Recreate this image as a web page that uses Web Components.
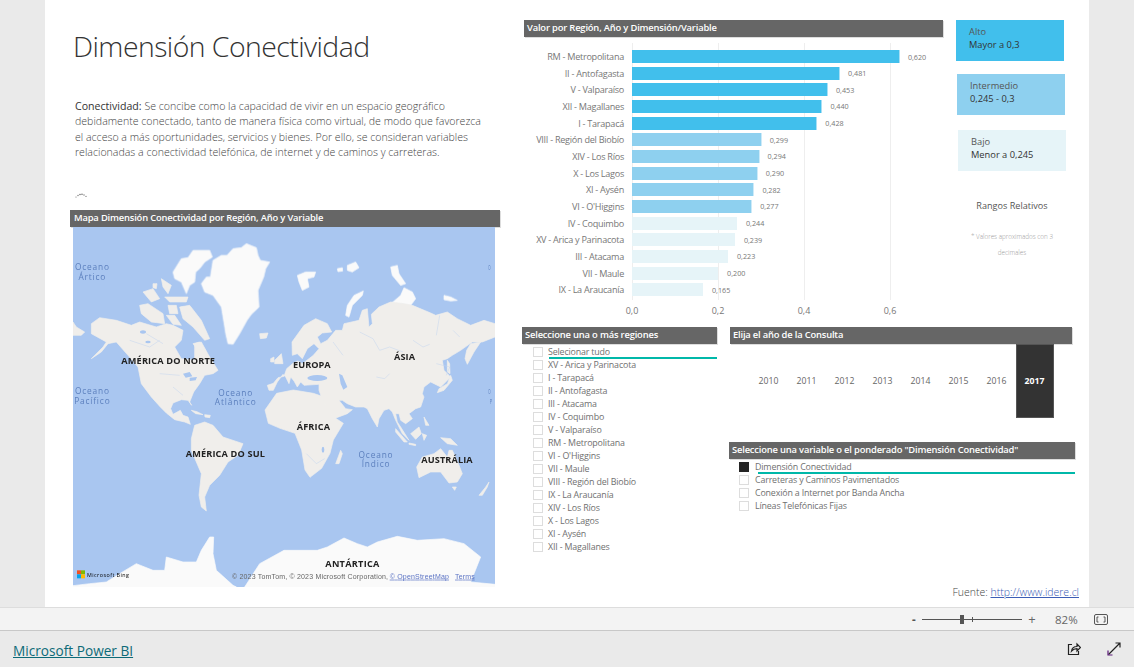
<!DOCTYPE html>
<html lang="es"><head><meta charset="utf-8"><title>Dimensión Conectividad</title>
<style>
html,body{margin:0;padding:0;background:#eaeaea;font-family:"Open Sans","Noto Sans",sans-serif}
</style></head><body>
<x-app></x-app>
<script>
const FONT='"Open Sans","Noto Sans",sans-serif';
function def(name,html,init){
  customElements.define(name,class extends HTMLElement{
    constructor(){super();const r=this.attachShadow({mode:'open'});r.innerHTML=html;}
    connectedCallback(){if(init&&!this._i){this._i=1;init(this.shadowRoot,this);}}
  });
}
def('x-head',`<style>:host{display:block;height:17px;background:#666;color:#fff;font:600 var(--hs,9.4px)/16px ${FONT};letter-spacing:-.18px;padding-left:var(--hp,4px);box-sizing:border-box;white-space:nowrap;overflow:hidden;box-shadow:1px 1px 0 #ddd}</style><slot></slot>`);

def('x-world-map',`<style>:host{display:block;width:422px;height:360px;overflow:hidden;margin-left:3px}svg{display:block;width:422px;height:360px}
.l{fill:#f0eeeb;stroke:#f0eeeb;stroke-width:2;stroke-linejoin:round;filter:url(#soft)}.w{fill:#fafafa;stroke:#fafafa;stroke-width:2;stroke-linejoin:round;filter:url(#soft)}.b{fill:#a9c6f0;filter:url(#soft)}.r{fill:none;stroke:#c3d4ee;stroke-width:1.5}
.c{font:700 27.5px ${FONT};fill:#222}.o{font:400 25px ${FONT};fill:#5b7fbd;letter-spacing:2.500px;text-anchor:middle}.e{font:400 24px ${FONT};fill:#5b7fbd}
.a{font:21px "Liberation Sans",sans-serif;fill:#666}.lk{fill:#5b73c4;text-decoration:underline}</style>
<svg viewBox="0 0 1266 1080" role="img" aria-label="Mapa">
<defs><filter id="soft" x="-5%" y="-5%" width="110%" height="110%"><feGaussianBlur stdDeviation="1.2"/></filter></defs>
<rect width="1266" height="1080" fill="#a9c6f0"/>
<g class="w">
<polygon points="385,170 400,150 412,150 420,100 445,85 462,85 480,65 505,62 520,50 550,62 555,85 562,100 590,105 578,125 572,150 555,190 558,240 535,262 522,280 500,320 480,352 465,350 458,320 455,300 445,240 420,205 395,195"/>
<polygon points="300,135 325,95 345,92 360,70 410,70 418,90 395,105 380,125 368,135 365,165 350,175 340,200 325,165 305,155"/>
<g transform="translate(633,0)">
<polygon points="40,145 65,135 95,135 90,150 70,155 75,180 55,190 45,165"/>
<polygon points="185,265 190,235 210,205 238,192 235,205 205,235 195,270"/>
<polygon points="320,120 340,115 345,140 365,170 350,175 325,145"/>
<polygon points="480,205 500,210 520,220 500,222 480,218"/>
<polygon points="190,115 215,105 225,122 205,135 190,130"/><polygon points="160,125 175,122 176,132 162,134"/>
<polygon points="315,235 350,205 360,182 385,195 395,215 380,235 350,230 325,240"/>
</g>
</g>
<g class="l">
<polygon points="0,285 10,300 35,315 25,325 0,325"/>
<polygon points="55,290 80,272 130,280 175,295 200,285 250,300 280,290 300,295 330,310 325,340 305,360 325,395 365,400 365,350 385,345 410,390 435,430 420,440 395,445 380,470 362,495 350,525 356,535 345,520 325,518 300,528 293,545 300,562 322,550 330,565 345,570 352,592 335,585 305,578 280,558 262,540 235,510 205,470 195,420 165,385 130,345 105,350 85,375 55,395 90,360 100,345 55,320"/>
<polygon points="320,240 350,235 385,280 410,335 395,340 360,300 330,275"/>
<polygon points="360,350 380,345 395,370 375,370"/>
<polygon points="200,235 225,230 270,260 275,290 235,285 205,260"/>
<polygon points="280,265 305,265 325,295 300,292"/>
<polygon points="210,195 240,185 260,215 235,225"/><polygon points="265,155 295,175 285,200 270,180"/>
<polygon points="275,210 345,210 340,225 290,225"/><polygon points="285,235 310,235 315,260 290,260"/>
<polygon points="325,240 345,240 360,265 335,270"/><polygon points="240,170 252,170 250,185 240,182"/>
<polygon points="560,320 585,318 580,333 562,335"/>
<polygon points="355,550 372,554 390,563 368,560"/><polygon points="395,563 412,565 410,572 396,570"/>
<polygon points="355,635 365,595 395,585 420,595 450,630 510,650 495,685 465,705 440,745 410,775 395,810 400,852 385,840 378,805 385,740 355,670"/>
<polygon points="576,549 611,499 661,489 721,499 751,509 781,569 811,589 781,639 771,679 746,724 711,751 696,729 686,669 666,619 621,604 586,589"/>
<g transform="translate(633,0)">
<polygon points="-32,469 -18,452 0,448 8,425 28,408 42,402 55,410 75,395 88,385 105,365 90,350 70,365 55,395 40,380 25,385 24,345 60,295 95,275 130,290 143,315 115,318 100,330 110,350 130,340 155,310 175,310 180,290 225,280 235,250 250,245 255,300 265,290 262,262 285,240 320,225 360,230 385,235 440,258 455,265 490,255 520,275 560,295 600,280 633,290 633,330 595,345 565,345 530,370 505,385 490,395 475,400 480,430 500,450 470,480 440,465 420,480 415,500 420,510 410,540 395,545 375,560 385,575 365,590 350,580 345,560 335,560 340,585 350,600 375,640 355,620 335,580 325,555 315,545 300,550 285,575 280,600 265,575 250,545 240,540 215,540 190,530 175,520 165,520 185,545 205,548 190,560 150,575 130,545 112,510 105,490 105,472 60,475 50,465 40,480 30,462 20,450 15,470 5,450 -3,442 -20,465 -32,490 -45,490 -50,475"/>
<polygon points="560,350 590,345 570,375 550,412 543,395 548,370"/>
<polygon points="490,400 497,410 498,440 490,435"/>
<polygon points="500,445 505,460 480,490 460,497 465,485 490,470"/>
<polygon points="-28,400 -8,380 -3,410 -28,410"/><polygon points="-40,395 -30,390 -30,405 -40,405"/>
<polygon points="335,605 370,645 360,645 335,615"/><polygon points="375,648 395,652 395,656 375,652"/>
<polygon points="380,620 405,600 412,620 395,637"/><polygon points="420,570 435,595 425,595"/>
<polygon points="470,632 500,635 520,655 490,650"/><polygon points="415,620 428,625 420,640"/>
<polygon points="398,720 415,690 450,680 470,665 490,690 495,670 505,670 525,715 535,740 520,765 495,768 470,735 440,735 405,752"/>
<polygon points="505,780 517,780 512,790"/><polygon points="585,805 605,780 615,765 610,780 595,805"/>
<polygon points="155,710 170,670 175,680 165,710"/>
</g>
</g>
<g class="w">
<polygon points="0,1080 0,1076 50,1070 100,1065 140,1040 190,1010 240,1030 275,1030 280,990 330,1005 370,1005 385,970 410,930 422,930 420,980 430,1030 480,1075 490,1080"/>
<polygon points="515,1080 560,1010 633,970 733,970 763,960 813,933 853,950 883,960 913,945 973,928 1033,940 1113,935 1173,950 1223,990 1203,1040 1193,1065 1266,1072 1266,1080"/>
</g>
<g class="b">
<ellipse cx="733" cy="453" rx="30" ry="9"/>
<polygon points="798,440 808,445 823,480 811,488 803,470"/>
<polygon points="330,440 350,435 358,448 338,452"/><polygon points="350,452 372,450 368,460 350,462"/>
<ellipse cx="210" cy="315" rx="9" ry="5"/><ellipse cx="225" cy="345" rx="8" ry="4"/>
<ellipse cx="750" cy="668" rx="4" ry="9"/>
</g>
<g class="r">
<path d="M860 315l40 20 20 35 30-10 40 15M1020 340l30 20 20-8M1100 265l-10 60M1140 310l20 20M780 345l30 40M910 450l25 5 15-15M1090 410l40 10-10 25M700 680l30 30 25-15M300 480l30 25M260 440l60 5M170 340l60 20 30-20M220 320l50 30"/>
</g>
<text class="o" x="58" y="130">Oceano</text><text class="o" x="58" y="159">Ártico</text>
<text class="o" x="58" y="501">Oceano</text><text class="o" x="58" y="530">Pacífico</text>
<text class="o" x="488" y="506">Oceano</text><text class="o" x="488" y="535">Atlântico</text>
<text class="o" x="909" y="692">Oceano</text><text class="o" x="909" y="721">Índico</text>
<text class="e" x="1246" y="130" textLength="7" lengthAdjust="spacingAndGlyphs">O</text>
<text class="e" x="1246" y="501" textLength="7" lengthAdjust="spacingAndGlyphs">O</text>
<text class="e" x="1250" y="530" textLength="7" lengthAdjust="spacingAndGlyphs">P</text>
<text class="c" x="145" y="410" textLength="281">AMÉRICA DO NORTE</text>
<text class="c" x="660" y="424" textLength="113">EUROPA</text>
<text class="c" x="963" y="400" textLength="63">ÁSIA</text>
<text class="c" x="671" y="610" textLength="100">ÁFRICA</text>
<text class="c" x="338" y="689" textLength="238">AMÉRICA DO SUL</text>
<text class="c" x="1045" y="708" textLength="154">AUSTRÁLIA</text>
<text class="c" x="757" y="1021" textLength="162">ANTÁRTICA</text>
<rect x="12" y="1030" width="12" height="12" fill="#f25022"/><rect x="24" y="1030" width="12" height="12" fill="#7fba00"/>
<rect x="12" y="1042" width="12" height="12" fill="#00a4ef"/><rect x="24" y="1042" width="12" height="12" fill="#ffb900"/>
<text x="42" y="1050" style="font:400 20px ${FONT};fill:#777" textLength="126">Microsoft Bing</text>
<text class="a" x="477" y="1055" textLength="468">© 2023 TomTom, © 2023 Microsoft Corporation,</text>
<text class="a lk" x="950" y="1055" textLength="178">© OpenStreetMap</text>
<text class="a lk" x="1146" y="1055" textLength="59">Terms</text>
</svg>`);

const DATA=[["RM - Metropolitana",.62,"620",0,1],["II - Antofagasta",.481,"481",0],["V - Valparaíso",.453,"453",0],["XII - Magallanes",.44,"440",0],["I - Tarapacá",.428,"428",0],["VIII - Región del Biobío",.299,"299",1],["XIV - Los Ríos",.294,"294",1],["X - Los Lagos",.29,"290",1],["XI - Aysén",.282,"282",1],["VI - O'Higgins",.277,"277",1],["IV - Coquimbo",.244,"244",2],["XV - Arica y Parinacota",.239,"239",2],["III - Atacama",.223,"223",2],["VII - Maule",.2,"200",2],["IX - La Araucanía",.165,"165",2]];
def('x-bar-chart',`<style>:host{display:block;position:relative;height:284px;--o:108px;font-family:${FONT}}
.plot{padding-top:5.200px}
.row{display:flex;align-items:center;height:16.67px}
.lab{width:100px;flex:none;text-align:right;font-size:9.1px;letter-spacing:-.27px;color:#777;white-space:nowrap;margin-right:8px}
.bar{height:13px;flex:none;box-sizing:border-box}
.val{font-size:7.2px;color:#777;margin-left:9px;white-space:nowrap}
.c0{background:#41bfec;box-shadow:1px 0 0 #a8dff5}.c1{background:#8ed0ef;box-shadow:1px 0 0 #cdeaf8}.c2{background:#e6f4f8}
.grid{position:absolute;left:var(--o);top:0;height:257px;width:259px;display:flex}
.grid i{width:86px;flex:none;border-left:1px solid #eee;box-sizing:border-box}
.axis{display:flex;margin-left:var(--o);margin-top:6px}
.axis span{width:86px;flex:none;font-size:9px;color:#777}.axis b{font-weight:400;display:inline-block;transform:translateX(-50%)}
.plot,.axis{position:relative}</style>
<div class="grid"><i></i><i></i><i></i><i style="width:1px"></i></div><div class="plot"></div>
<div class="axis"><span><b>0,0</b></span><span><b>0,2</b></span><span><b>0,4</b></span><span><b>0,6</b></span></div>`,
(r)=>{r.querySelector('.plot').innerHTML=DATA.map(d=>`<div class="row"><span class="lab">${d[0]}</span><span class="bar c${d[3]}" style="width:${(d[1]*430.5).toFixed(1)}px"></span><span class="val">0,${d[2]}</span></div>`).join('')});

def('x-legend',`<style>:host{display:block;width:108px;height:41px;box-sizing:border-box;padding:5px 0 0 13px;font:9.3px/13.4px ${FONT};color:#555}
.b{color:#333;display:block}</style><slot></slot><span class="b"><slot name="v"></slot></span>`);

def('x-check-list',`<style>:host{display:block;font:8.9px/13px ${FONT};letter-spacing:-.17px;color:#707070}</style><slot></slot>`);
def('x-check',`<style>:host{display:flex;align-items:center;height:13px;position:relative;white-space:nowrap}
.box{width:10px;height:10px;box-sizing:border-box;border:1px solid #ddd;flex:none;margin-right:var(--gap,5px);background:#fff}
:host([on]) .box{background:#252525;border-color:#252525}
.ul{display:none;position:absolute;left:var(--ul,16px);right:0;top:12px;height:2px;background:#00b8a9}
:host([ul]) .ul{display:block}</style><span class="box"></span><slot></slot><span class="ul"></span>`);

def('x-years',`<style>:host{display:grid;grid-template-columns:repeat(8,38px);margin-left:20.500px;height:73px;font:8.7px/74px ${FONT};color:#666;text-align:center}
span{display:block}.on{background:#333;color:#fff;font-weight:700;box-shadow:inset 0 0 0 1px #555}</style>
<span>2010</span><span>2011</span><span>2012</span><span>2013</span><span>2014</span><span>2015</span><span>2016</span><span class="on">2017</span>`);

def('x-zoom-bar',`<style>:host{display:flex;align-items:center;height:24px;box-sizing:border-box;background:#f3f3f3;border-top:1px solid #ddd;border-bottom:1px solid #c8c8c8;font:11.500px ${FONT};color:#666;padding-left:912px}
.m{font-weight:700;width:10px;color:#555}.s{position:relative;width:100px;height:1px;background:#555;flex:none}
.t{position:absolute;left:38px;top:-4px;width:4px;height:9px;background:#555}.k{position:absolute;left:50px;top:-2px;width:1px;height:5px;background:#555}
.p{width:20px;text-align:center;font-size:13px;margin-left:0}.v{margin-left:13px;width:32px;color:#666}svg{margin-left:7px}</style>
<span class="m">-</span><span class="s"><i class="t"></i><i class="k"></i></span><span class="p">+</span><span class="v">82%</span>
<svg width="14" height="11" viewBox="0 0 14 11" fill="none" stroke="#555"><rect x=".5" y=".5" width="13" height="10" rx="1.500"/><path d="M4.500 3H3v5h1.500M9.500 3H11v5H9.500"/></svg>`);

def('x-foot',`<style>:host{display:flex;align-items:center;height:36px;box-sizing:border-box;padding:3px 0 0 13px;background:#eaeaea;font:13.650px ${FONT}}
a{color:#0d6a78;text-decoration:underline;flex:1}svg{display:block;margin-top:-3px}.i1{margin-right:26px}.i2{margin-right:13px}</style>
<a href="#">Microsoft Power BI</a>
<svg class="i1" width="14" height="14" viewBox="0 0 14 14" fill="none" stroke="#222" stroke-width="1.2"><path d="M5 2.500H1.500v10h10V9"/><path d="M4.500 9c.5-3 3-4.500 5.500-4.500V2l3.500 3.500L10 9V6.600C8 6.600 6 7.300 4.500 9z"/></svg>
<svg class="i2" width="14" height="14" viewBox="0 0 14 14" fill="none" stroke-width="1.2"><path d="M1.500 12.500l11-11M8.500 1h4.500v4.500" stroke="#222"/><path d="M1 8.500V13h4.500" stroke="#5b1a78"/></svg>`);

const regs=["Selecionar tudo","XV - Arica y Parinacota","I - Tarapacá","II - Antofagasta","III - Atacama","IV - Coquimbo","V - Valparaíso","RM - Metropolitana","VI - O'Higgins","VII - Maule","VIII - Región del Biobío","IX - La Araucanía","XIV - Los Ríos","X - Los Lagos","XI - Aysén","XII - Magallanes"];
def('x-app',`<style>:host{display:flex;flex-direction:column;width:1134px;height:667px;overflow:hidden;color:#444}
.wrap{height:607px;padding:0 45px;flex:none;box-sizing:border-box;background:#eaeaea}
.canvas{height:607px;background:#fff;display:flex}
.left{width:430px;margin-left:25px;flex:none}
h1{margin:25px 0 0 3px;font:300 28.400px/42px ${FONT};letter-spacing:-.55px;color:#333;white-space:nowrap}
.desc{margin:32px 0 0 5px;font:300 10.600px/15.400px ${FONT};color:#444;white-space:nowrap}
.desc b{font-weight:400;color:#333}
.dots{display:block;margin:0 0 0 5px}
.dw{height:17px;padding-top:32px}
.right{margin-left:22px;width:554px;display:flex;flex-direction:column;height:607px;flex:none}
.top{display:flex;height:327px;padding-top:20px;box-sizing:border-box}
.chartc{width:419px;margin-left:2px;flex:none}
.leg{margin-left:13px;width:112px;flex:none;display:flex;flex-direction:column}
.leg x-legend:nth-child(1){background:#41bfec}.leg x-legend:nth-child(2){background:#8ed0ef;margin:13px 0 0 1px}.leg x-legend:nth-child(3){background:#e6f4f8;margin:15px 0 0 2px}
.rr{text-align:center;font:9.100px/12px ${FONT};color:#555;margin-top:29px}
.note{text-align:center;font:300 6.300px/16px ${FONT};color:#999;margin-top:17px;padding:0 2px}
.bottom{display:flex}
.regs{width:195px;flex:none}
.regs x-check-list{margin:1px 0 0 11px;--ul:16px}
.rc{margin-left:12px;width:346px;flex:none}
.yh{margin:0 3px 0 1px;--hp:3px}
.vh{margin-top:25px;--hp:3px}
.vl{margin:1px 0 0 10px;--gap:6px;--ul:19px}
.fu{margin-top:auto;padding:0 0 8px;text-align:right;font:300 10.500px/14px ${FONT};color:#444;width:557px}
.fu a{color:#3b5db5}
</style>
<div class="wrap"><div class="canvas">
<div class="left">
<h1>Dimensión Conectividad</h1>
<div class="desc"><b>Conectividad:</b> Se concibe como la capacidad de vivir en un espacio geográfico<br>debidamente conectado, tanto de manera física como virtual, de modo que favorezca<br>el acceso a más oportunidades, servicios y bienes. Por ello, se consideran variables<br>relacionadas a conectividad telefónica, de internet y de caminos y carreteras.</div>
<div class="dw"><svg class="dots" width="13" height="5" viewBox="0 0 13 5" fill="#777"><circle cx="1" cy="4" r=".6"/><circle cx="3" cy="2.500" r=".7"/><circle cx="5" cy="1.500" r=".8"/><circle cx="7" cy="1.200" r=".8"/><circle cx="9" cy="2" r=".7"/><circle cx="11" cy="3.400" r=".6"/></svg></div>
<x-head style="--hp:4px">Mapa Dimensión Conectividad por Región, Año y Variable</x-head>
<x-world-map></x-world-map>
</div>
<div class="right">
<div class="top">
<div class="chartc"><x-head style="--hp:3px;margin-bottom:6px">Valor por Región, Año y Dimensión/Variable</x-head><x-bar-chart></x-bar-chart></div>
<div class="leg">
<x-legend>Alto<span slot="v">Mayor a 0,3</span></x-legend>
<x-legend>Intermedio<span slot="v">0,245 - 0,3</span></x-legend>
<x-legend>Bajo<span slot="v">Menor a 0,245</span></x-legend>
<div class="rr">Rangos Relativos</div>
<div class="note">* Valores aproximados con 3 decimales</div>
</div>
</div>
<div class="bottom">
<div class="regs"><x-head style="--hp:3px">Seleccione una o más regiones</x-head><x-check-list id="rl"></x-check-list></div>
<div class="rc">
<div class="yh"><x-head style="--hp:3px">Elija el año de la Consulta</x-head></div>
<x-years></x-years>
<div class="vh"><x-head>Seleccione una variable o el ponderado "Dimensión Conectividad"</x-head></div>
<x-check-list class="vl"><x-check on ul>Dimensión Conectividad</x-check><x-check>Carreteras y Caminos Pavimentados</x-check><x-check>Conexión a Internet por Banda Ancha</x-check><x-check>Líneas Telefónicas Fijas</x-check></x-check-list>
</div>
</div>
<div class="fu">Fuente: <a href="#">http://www.idere.cl</a></div>
</div>
</div></div>
<x-zoom-bar></x-zoom-bar><x-foot></x-foot>`,
(r)=>{r.getElementById('rl').innerHTML=regs.map((t,i)=>`<x-check ${i==0?'ul':''}>${t}</x-check>`).join('')});
</script>
</body></html>
